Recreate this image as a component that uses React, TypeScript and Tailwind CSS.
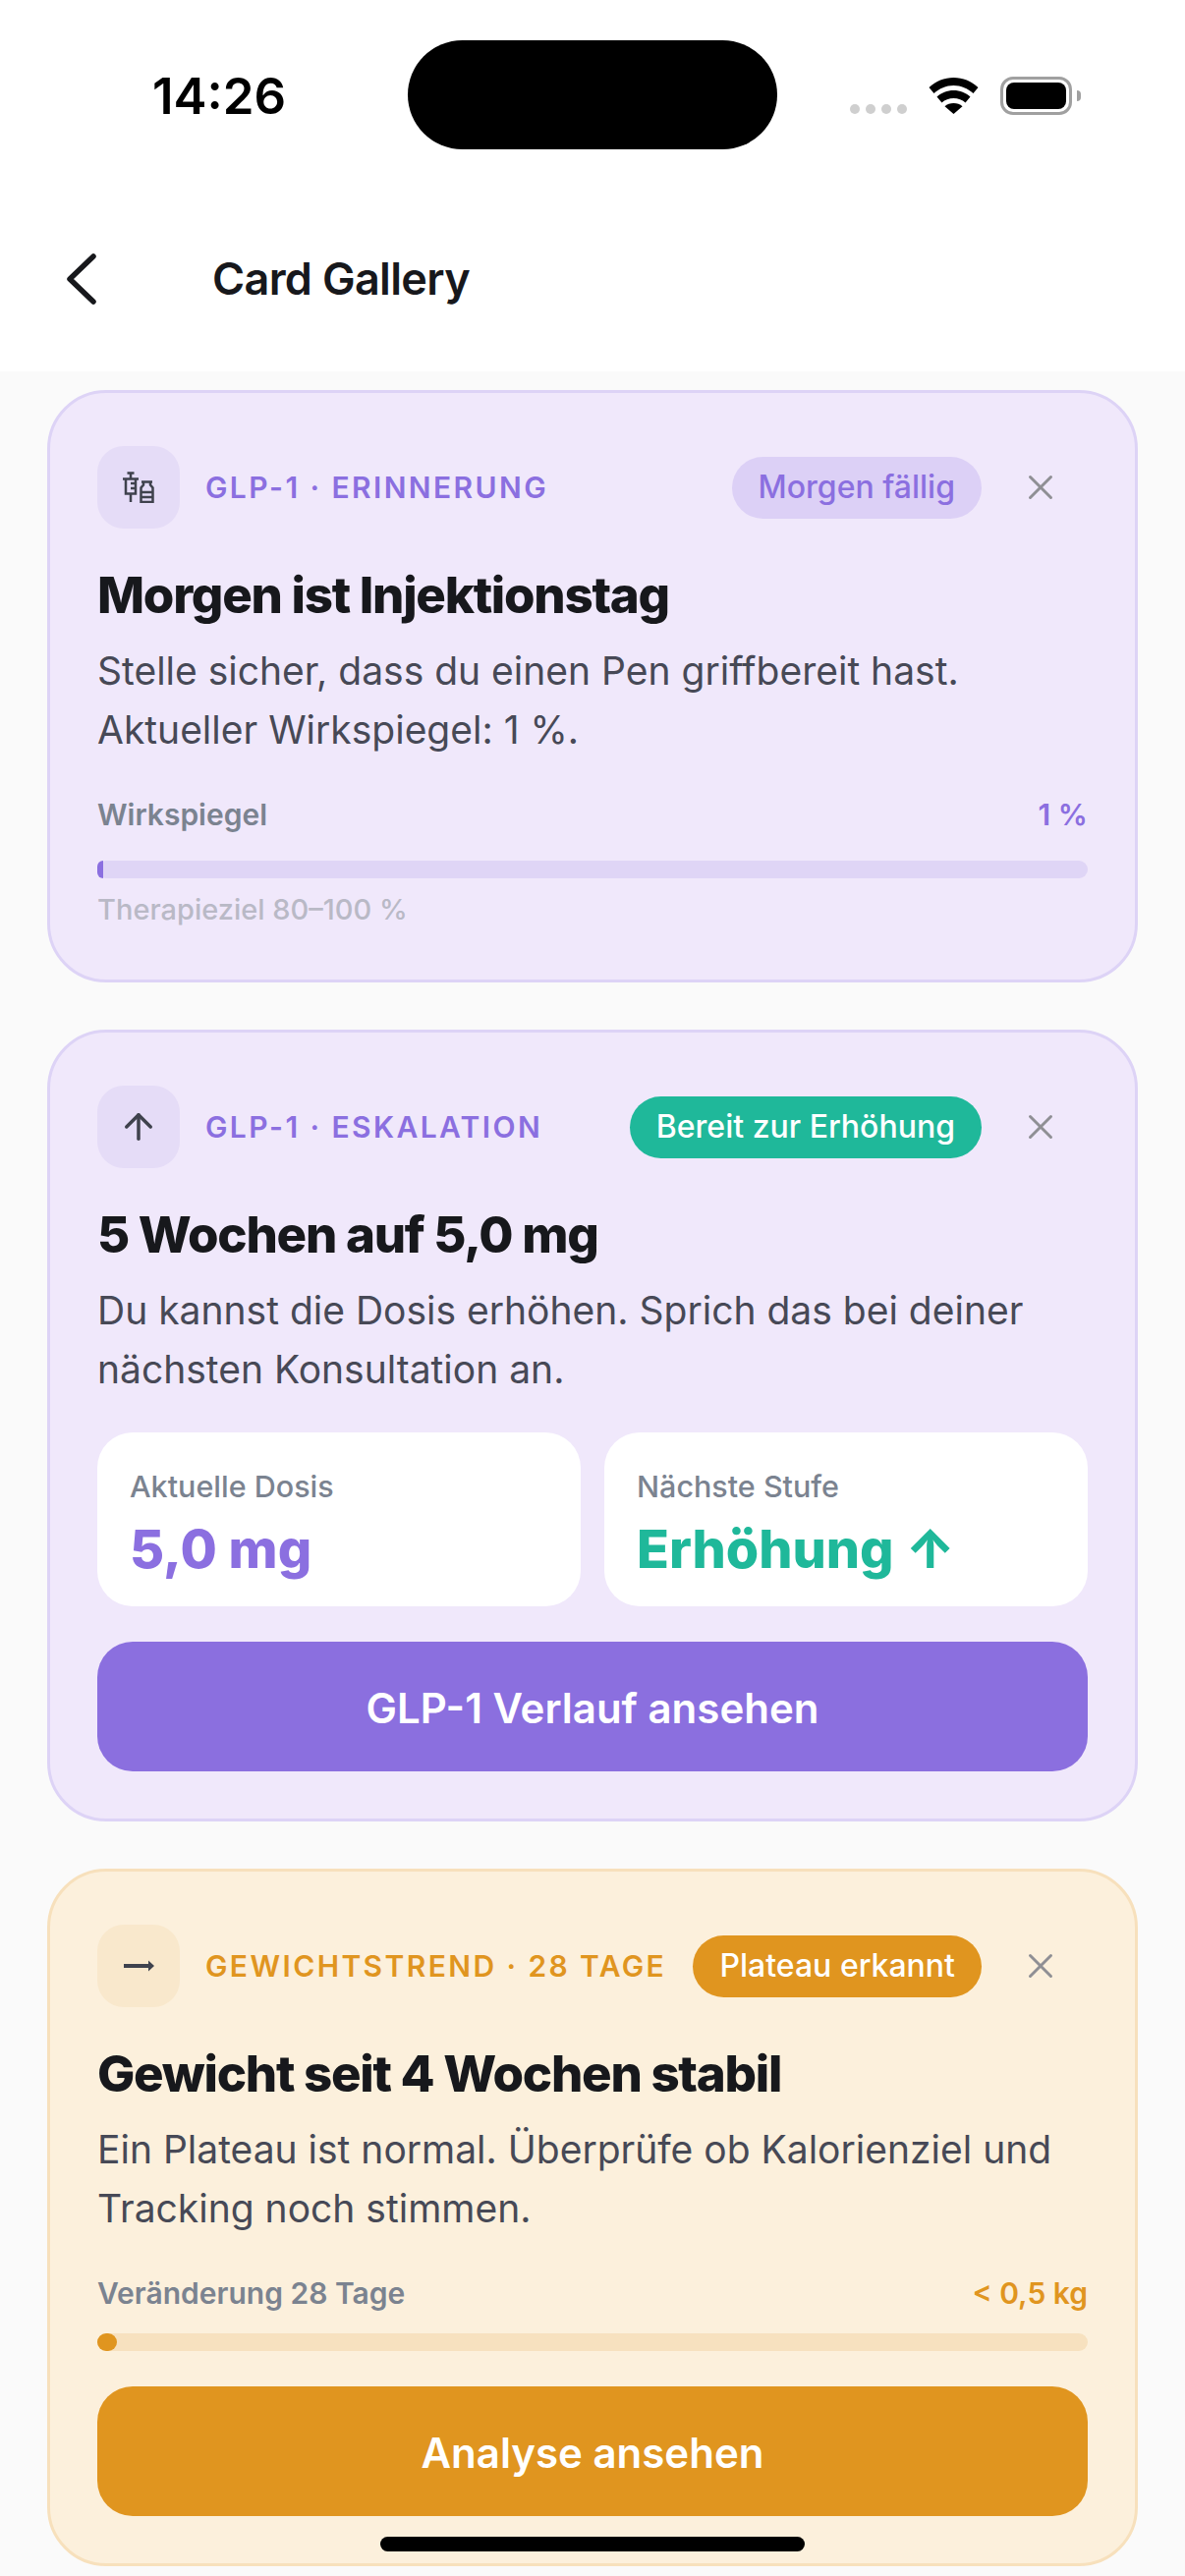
import { ArrowUp, X } from "lucide-react";

function WifiIcon() {
  return (
    <svg viewBox="0 0 50 37" className="w-[51px] h-[37px]">
      <path d="M25 0C15.500 0 7 3.500 0 10l5 6c5.500-5 12.500-8 20-8s14.500 3 20 8l5-6C43 3.500 34.500 0 25 0z" fill="#000" />
      <path d="M25 13c-6.500 0-12.500 2.500-17 6.500l5 6c3-2.800 7.500-4.500 12-4.500s9 1.700 12 4.500l5-6C37.500 15.500 31.500 13 25 13z" fill="#000" />
      <path d="M25 26c-3.500 0-6.500 1.200-9 3.200L25 37l9-7.800C31.500 27.200 28.500 26 25 26z" fill="#000" />
    </svg>
  );
}

function StatusBar() {
  return (
    <div className="relative h-[160px] flex items-start justify-between pl-[155px] pr-[106px] pt-[72px]">
      <span className="text-[51px] leading-[52px] font-semibold text-black">14:26</span>
      <div className="absolute left-[415px] top-[41px] w-[376px] h-[111px] rounded-[56px] bg-black" />
      <div className="flex items-center gap-[22px] pt-[6px]">
        <div className="flex gap-[6px] mt-[27px]">
          <div className="w-[10px] h-[10px] rounded-full bg-[#cfcfcf]" />
          <div className="w-[10px] h-[10px] rounded-full bg-[#cfcfcf]" />
          <div className="w-[10px] h-[10px] rounded-full bg-[#cfcfcf]" />
          <div className="w-[10px] h-[10px] rounded-full bg-[#cfcfcf]" />
        </div>
        <WifiIcon />
        <div className="flex items-center gap-[5px]">
          <div className="w-[73px] h-[39px] rounded-[13px] border-[3px] border-[#a0a0a0] p-[3px]">
            <div className="w-full h-full rounded-[8px] bg-black" />
          </div>
          <div className="w-[4px] h-[11px] rounded-r-full bg-[#a0a0a0]" />
        </div>
      </div>
    </div>
  );
}

function BackChevron() {
  return (
    <svg viewBox="0 0 30 52" fill="none" stroke="#17181c" strokeWidth="5.500" strokeLinecap="round" strokeLinejoin="round" className="w-[30px] h-[52px]">
      <path d="M27 3 3 26l24 23" />
    </svg>
  );
}

function SyringeVial() {
  return (
    <svg viewBox="0 0 32 32" fill="none" stroke="#3f424d" strokeWidth="2.500" className="w-[32px] h-[32px]">
      <path d="M4.500 1.500h7M8 1.500v5M0 7.500h16M3 7.500v15h10v-15M8 22.500V31M8 12h5M8 17h5" />
      <path d="M19 10.500h11M21 10.500v3l-2.500 3v14.500h12V16.500l-2.500-3v-3M18.500 21h12M18.500 26h12" />
    </svg>
  );
}

function Tile({ bg, children }: { bg: string; children: React.ReactNode }) {
  return (
    <div className={`w-[84px] h-[84px] shrink-0 rounded-[27px] flex items-center justify-center ${bg}`}>
      {children}
    </div>
  );
}

function CardHead(props: {
  icon: React.ReactNode;
  tile: string;
  label: string;
  labelColor: string;
  badge: string;
  badgeClass: string;
}) {
  return (
    <div className="h-[96px] flex items-center">
      <Tile bg={props.tile}>{props.icon}</Tile>
      <span className={`ml-[26px] text-[30px] font-semibold tracking-[0.08em] whitespace-nowrap ${props.labelColor}`}>
        {props.label}
      </span>
      <div className="flex-1" />
      <span className={`h-[63px] px-[27px] rounded-full flex items-center text-[32px] font-medium whitespace-nowrap ${props.badgeClass}`}>
        {props.badge}
      </span>
      <X className="ml-[39px] mr-[27px] w-[42px] h-[42px] text-[#8f8f94]" strokeWidth={1.7} />
    </div>
  );
}

function Meter(props: { label: string; value: string; valueColor: string; track: string; fill: string; gap: string }) {
  return (
    <div>
      <div className="flex justify-between text-[30px] leading-[36px] font-semibold">
        <span className="text-[#7b8390]">{props.label}</span>
        <span className={props.valueColor}>{props.value}</span>
      </div>
      <div className={`h-[18px] rounded-full ${props.gap} ${props.track}`}>
        <div className={`h-full ${props.fill}`} />
      </div>
    </div>
  );
}

function Title({ children }: { children: React.ReactNode }) {
  return (
    <h2 className="mt-[29px] text-[51px] leading-[66px] font-extrabold tracking-[-0.025em] text-[#17181c]">
      {children}
    </h2>
  );
}

function Body({ children }: { children: React.ReactNode }) {
  return <p className="mt-[14px] text-[39px] leading-[60px] text-[#474956]">{children}</p>;
}

export default function App() {
  return (
    <div className="relative w-[1206px] h-[2622px] overflow-hidden bg-[#fafafa] font-['Inter',sans-serif]">
      <div className="bg-white h-[378px]">
        <StatusBar />
        <div className="mt-[64px] flex items-center h-[120px] pl-[68px]">
          <BackChevron />
          <span className="ml-[118px] text-[45px] font-semibold tracking-[-0.015em] text-[#17181c]">Card Gallery</span>
        </div>
      </div>

      <div className="px-[48px] pt-[19px] flex flex-col gap-[48px]">
        <div className="rounded-[60px] border-[3px] border-[#ddd3f6] bg-[#f0e8fb] px-[48px] pt-[48px] pb-[53px]">
          <CardHead
            icon={<SyringeVial />}
            tile="bg-[#e5dcf7]"
            label="GLP-1 · ERINNERUNG"
            labelColor="text-[#8b6fe0]"
            badge="Morgen fällig"
            badgeClass="bg-[#dcd0f6] text-[#8b6fe0]"
          />
          <Title>Morgen ist Injektionstag</Title>
          <Body>
            Stelle sicher, dass du einen Pen griffbereit hast.
            <br />
            Aktueller Wirkspiegel: 1 %.
          </Body>
          <div className="mt-[38px]">
            <Meter
              label="Wirkspiegel"
              value="1 %"
              valueColor="text-[#8b6fe0]"
              track="bg-[#dfd5f6]"
              fill="w-[6px] rounded-l-full bg-[#8b6fe0]"
              gap="mt-[29px]"
            />
          </div>
          <p className="mt-[14px] text-[29px] leading-[36px] font-medium text-[#b9b9c6]">Therapieziel 80–100 %</p>
        </div>

        <div className="rounded-[60px] border-[3px] border-[#ddd3f6] bg-[#f0e8fb] px-[48px] pt-[48px] pb-[48px]">
          <CardHead
            icon={<ArrowUp className="w-[42px] h-[42px] text-[#3f424d]" strokeWidth={2} />}
            tile="bg-[#e5dcf7]"
            label="GLP-1 · ESKALATION"
            labelColor="text-[#8b6fe0]"
            badge="Bereit zur Erhöhung"
            badgeClass="bg-[#1fb89a] text-white"
          />
          <Title>5 Wochen auf 5,0 mg</Title>
          <Body>Du kannst die Dosis erhöhen. Sprich das bei deiner nächsten Konsultation an.</Body>
          <div className="mt-[34px] grid grid-cols-2 gap-[24px]">
            <div className="h-[177px] rounded-[36px] bg-white px-[33px] pt-[37px]">
              <div className="text-[30.500px] leading-[36px] font-medium text-[#7b8390]">Aktuelle Dosis</div>
              <div className="mt-[10px] text-[54px] leading-[72px] font-extrabold text-[#8b6fe0]">5,0 mg</div>
            </div>
            <div className="h-[177px] rounded-[36px] bg-white px-[33px] pt-[37px]">
              <div className="text-[30.500px] leading-[36px] font-medium text-[#7b8390]">Nächste Stufe</div>
              <div className="mt-[10px] text-[54px] leading-[72px] font-extrabold text-[#1fb89a]">Erhöhung ↑</div>
            </div>
          </div>
          <button className="mt-[36px] w-full h-[132px] pt-[3px] rounded-[36px] bg-[#8b6fdf] text-white text-[42px] font-semibold">
            GLP-1 Verlauf ansehen
          </button>
        </div>

        <div className="rounded-[60px] border-[3px] border-[#f7e0bc] bg-[#fcf0dc] px-[48px] pt-[48px] pb-[48px]">
          <CardHead
            icon={
              <svg viewBox="0 0 31 12" className="w-[31px] h-[12px]" fill="#3f424d">
                <path d="M0 4h26v4H0z" />
                <path d="M25 0.500 31 6l-6 5.500z" />
              </svg>
            }
            tile="bg-[#f9e8cc]"
            label="GEWICHTSTREND · 28 TAGE"
            labelColor="text-[#e0951f]"
            badge="Plateau erkannt"
            badgeClass="bg-[#e0951f] text-white"
          />
          <Title>Gewicht seit 4 Wochen stabil</Title>
          <Body>Ein Plateau ist normal. Überprüfe ob Kalorienziel und Tracking noch stimmen.</Body>
          <div className="mt-[38px]">
            <Meter
              label="Veränderung 28 Tage"
              value="< 0,5 kg"
              valueColor="text-[#e0951f]"
              track="bg-[#f7e1bf]"
              fill="w-[20px] rounded-full bg-[#e0951f]"
              gap="mt-[23px]"
            />
          </div>
          <button className="mt-[36px] w-full h-[132px] pt-[3px] rounded-[36px] bg-[#e0951f] text-white text-[42px] font-semibold">
            Analyse ansehen
          </button>
        </div>
      </div>

      {/* home indicator */}
      <div className="absolute left-[387px] top-[2582px] w-[432px] h-[15px] rounded-full bg-black" />
    </div>
  );
}
